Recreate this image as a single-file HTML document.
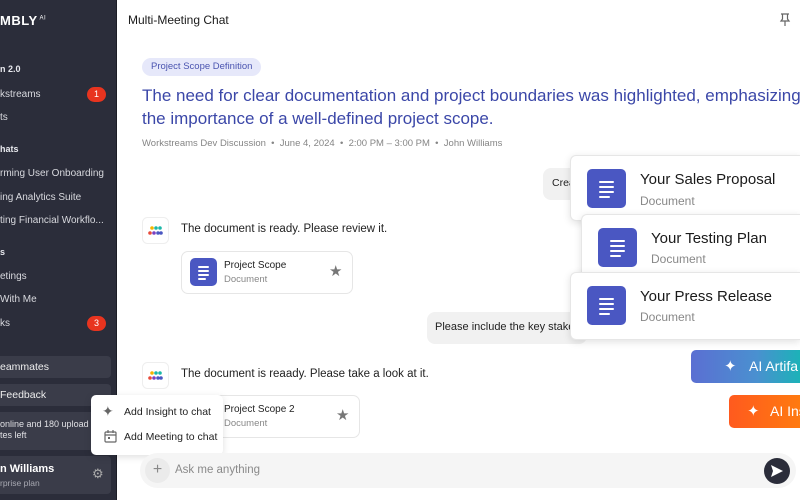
<!DOCTYPE html>
<html><head><meta charset="utf-8"><style>
*{box-sizing:border-box;margin:0;padding:0}
html,body{width:800px;height:500px;overflow:hidden}
body{position:relative;font-family:"Liberation Sans",sans-serif;background:#fff;color:#222}
#wrap{position:absolute;left:0;top:0;width:800px;height:500px;overflow:hidden}
.a{position:absolute;white-space:nowrap}
#sb{position:absolute;left:0;top:0;width:117px;height:500px;background:#2b2d3a;border-right:1px solid #1c1d26;overflow:hidden}
.sb{color:#d8d9de;font-size:10px}
.sh{color:#e8e9ee;font-size:9px;font-weight:bold}
.badge{position:absolute;width:19px;height:15px;border-radius:8px;background:#e8341f;color:#fff;font-size:9px;text-align:center;line-height:15px}
.btn{position:absolute;left:0;width:111px;background:#3a3c49;border-radius:0 4px 4px 0}
.doc{position:absolute;background:#4a57c2;border-radius:5px}
.doc i{position:absolute;left:30%;height:2px;background:#fff;border-radius:1px}
.card{position:absolute;background:#fff;border:1px solid #e6e6e6;border-radius:7px}
.rc{position:absolute;background:#fff;border:1px solid #e6e6e6;border-right:none;border-radius:6px 0 0 6px;box-shadow:0 2px 8px rgba(0,0,0,.12)}
.bc{position:absolute;background:#fff;box-shadow:0 2px 8px rgba(0,0,0,.13);border-radius:5px}
</style></head><body><div id="wrap">
<div id="sb">
<div class="a" style="left:0;top:13px;color:#fff;font-weight:bold;font-size:13px;letter-spacing:.5px">MBLY<sup style="font-size:6px;font-weight:normal"> AI</sup></div>
<div class="a sh" style="top:64px;left:0">n 2.0</div>
<div class="a sb" style="top:89px">kstreams</div><div class="badge" style="left:87px;top:87px">1</div>
<div class="a sb" style="top:112px">ts</div>
<div class="a sh" style="top:144px">hats</div>
<div class="a sb" style="top:168px">rming User Onboarding</div>
<div class="a sb" style="top:192px">ing Analytics Suite</div>
<div class="a sb" style="top:215px">ting Financial Workflo...</div>
<div class="a sh" style="top:247px">s</div>
<div class="a sb" style="top:271px">etings</div>
<div class="a sb" style="top:294px">With Me</div>
<div class="a sb" style="top:318px">ks</div><div class="badge" style="left:87px;top:316px">3</div>
<div class="btn" style="top:356px;height:22px"></div><div class="a sb" style="top:361px;color:#eee;font-size:10.5px">eammates</div>
<div class="btn" style="top:384px;height:22px"></div><div class="a sb" style="top:389px;color:#eee;font-size:10.5px">Feedback</div>
<div class="btn" style="top:412px;height:38px"></div>
<div class="a" style="top:419px;color:#e0e0e4;font-size:9px;line-height:11px">online and 180 upload<br>tes left</div>
<div class="btn" style="top:456px;height:38px"></div>
<div class="a" style="top:463px;color:#fff;font-size:11px;font-weight:bold">n Williams</div>
<div class="a" style="top:478px;color:#a8a9b2;font-size:8.5px">rprise plan</div>
<div class="a" style="left:92px;top:466px;color:#aaa;font-size:13px">⚙</div>
</div>

<div class="a" style="left:128px;top:13px;font-size:12px;color:#1a1a1a">Multi-Meeting Chat</div>
<svg class="a" style="left:779px;top:13px" width="12" height="14" viewBox="0 0 12 14"><path d="M2 1h8M3.5 1v5L2 8h8L8.5 6V1M6 8v5" stroke="#666" stroke-width="1.2" fill="none"/></svg>

<div class="a" style="left:142px;top:58px;height:18px;padding:0 9px;background:#e6e8fa;border-radius:9px;color:#4a54b0;font-size:9.5px;line-height:18px">Project Scope Definition</div>
<div class="a" style="left:142px;top:84px;color:#3b47a8;font-size:17px;line-height:23px;font-weight:500">The need for clear documentation and project boundaries was highlighted, emphasizing<br>the importance of a well-defined project scope.</div>
<div class="a" style="left:142px;top:138px;color:#858585;font-size:9.5px">Workstreams Dev Discussion &nbsp;•&nbsp; June 4, 2024 &nbsp;•&nbsp; 2:00 PM – 3:00 PM &nbsp;•&nbsp; John Williams</div>

<div class="a" style="left:543px;top:168px;width:120px;height:32px;background:#f1f1f1;border-radius:8px;font-size:10.5px;padding:9px 9px">Crea</div>

<svg class="a" style="left:142px;top:217px" width="27" height="27"><rect x=".5" y=".5" width="26" height="26" rx="5" fill="#fff" stroke="#eee"/><circle cx="10" cy="11" r="1.8" fill="#f5b400"/><circle cx="14" cy="11" r="1.8" fill="#1cb8a8"/><circle cx="18" cy="11" r="1.8" fill="#1cb8a8"/><circle cx="8" cy="16" r="1.8" fill="#e84a3a"/><circle cx="12" cy="16" r="1.8" fill="#7a3fc0"/><circle cx="16" cy="16" r="1.8" fill="#4a57c2"/><circle cx="19" cy="16" r="1.8" fill="#4a57c2"/></svg>
<div class="a" style="left:181px;top:223px;font-size:11.5px">The document is ready. Please review it.</div>
<div class="card" style="left:181px;top:251px;width:172px;height:43px"></div>
<div class="doc" style="left:190px;top:258px;width:27px;height:28px"><i style="top:8px;width:40%"></i><i style="top:12px;width:40%"></i><i style="top:16px;width:40%"></i><i style="top:20px;width:28%"></i></div>
<div class="a" style="left:224px;top:260px;font-size:10px">Project Scope</div>
<div class="a" style="left:224px;top:274px;font-size:9.5px;color:#888">Document</div>
<div class="a" style="left:329px;top:262px;font-size:15px;color:#777">★</div>

<div class="a" style="left:427px;top:312px;width:160px;height:32px;background:#f1f1f1;border-radius:8px;font-size:11px;padding:9px 8px">Please include the key stake</div>

<svg class="a" style="left:142px;top:362px" width="27" height="27"><rect x=".5" y=".5" width="26" height="26" rx="5" fill="#fff" stroke="#eee"/><circle cx="10" cy="11" r="1.8" fill="#f5b400"/><circle cx="14" cy="11" r="1.8" fill="#1cb8a8"/><circle cx="18" cy="11" r="1.8" fill="#1cb8a8"/><circle cx="8" cy="16" r="1.8" fill="#e84a3a"/><circle cx="12" cy="16" r="1.8" fill="#7a3fc0"/><circle cx="16" cy="16" r="1.8" fill="#4a57c2"/><circle cx="19" cy="16" r="1.8" fill="#4a57c2"/></svg>
<div class="a" style="left:181px;top:368px;font-size:11.5px">The document is reaady. Please take a look at it.</div>
<div class="card" style="left:181px;top:395px;width:179px;height:43px"></div>
<div class="a" style="left:224px;top:404px;font-size:10px">Project Scope 2</div>
<div class="a" style="left:224px;top:418px;font-size:9.5px;color:#888">Document</div>
<div class="a" style="left:336px;top:406px;font-size:15px;color:#777">★</div>

<div class="bc" style="left:91px;top:395px;width:132px;height:60px"></div>
<div class="a" style="left:102px;top:403px;font-size:14px;color:#666">✦</div>
<div class="a" style="left:124px;top:406px;font-size:10.5px">Add Insight to chat</div>
<svg class="a" style="left:104px;top:430px" width="13" height="13"><rect x="1" y="2" width="11" height="10" rx="1" fill="none" stroke="#666" stroke-width="1.2"/><path d="M1 5h11M4 0v3M9 0v3" stroke="#666" stroke-width="1.2"/><rect x="4" y="7" width="2" height="2" fill="#666"/></svg>
<div class="a" style="left:124px;top:431px;font-size:10.5px">Add Meeting to chat</div>

<div class="a" style="left:140px;top:453px;width:656px;height:35px;background:#f5f5f5;border-radius:18px"></div>
<div class="a" style="left:145px;top:458px;width:25px;height:25px;border-radius:50%;background:#ebebeb;color:#888;font-size:16px;text-align:center;line-height:24px">+</div>
<div class="a" style="left:175px;top:464px;font-size:11.5px;color:#8a8a8a">Ask me anything</div>
<div class="a" style="left:764px;top:458px;width:26px;height:26px;border-radius:50%;background:#2b2d3a"></div>
<svg class="a" style="left:770px;top:464px" width="14" height="14"><path d="M1 1l12 6-12 6 2-6z" fill="#fff"/></svg>

<div class="rc" style="left:570px;top:155px;width:230px;height:66px"></div>
<div class="doc" style="left:587px;top:169px;width:39px;height:39px"><i style="top:12px;width:40%"></i><i style="top:17px;width:40%"></i><i style="top:22px;width:40%"></i><i style="top:27px;width:28%"></i></div>
<div class="a" style="left:640px;top:171px;font-size:15px;color:#1a1a1a">Your Sales Proposal</div>
<div class="a" style="left:640px;top:194px;font-size:12px;color:#888">Document</div>

<div class="rc" style="left:581px;top:214px;width:219px;height:66px"></div>
<div class="doc" style="left:598px;top:228px;width:39px;height:39px"><i style="top:12px;width:40%"></i><i style="top:17px;width:40%"></i><i style="top:22px;width:40%"></i><i style="top:27px;width:28%"></i></div>
<div class="a" style="left:651px;top:230px;font-size:15px;color:#1a1a1a">Your Testing Plan</div>
<div class="a" style="left:651px;top:252px;font-size:12px;color:#888">Document</div>

<div class="rc" style="left:570px;top:272px;width:230px;height:68px"></div>
<div class="doc" style="left:587px;top:286px;width:39px;height:39px"><i style="top:12px;width:40%"></i><i style="top:17px;width:40%"></i><i style="top:22px;width:40%"></i><i style="top:27px;width:28%"></i></div>
<div class="a" style="left:640px;top:288px;font-size:15px;color:#1a1a1a">Your Press Release</div>
<div class="a" style="left:640px;top:310px;font-size:12px;color:#888">Document</div>

<div class="a" style="left:691px;top:350px;width:109px;height:33px;border-radius:5px 0 0 5px;background:linear-gradient(90deg,#5b6fd2,#4a90d0 60%,#1cb2b8)"></div>
<div class="a" style="left:724px;top:357px;color:#fff;font-size:15px">✦</div>
<div class="a" style="left:749px;top:358px;color:#fff;font-size:14px">AI Artifa</div>
<div class="a" style="left:729px;top:395px;width:71px;height:33px;border-radius:5px 0 0 5px;background:linear-gradient(90deg,#ff5a1e,#ff7a10)"></div>
<div class="a" style="left:747px;top:402px;color:#fff;font-size:15px">✦</div>
<div class="a" style="left:770px;top:403px;color:#fff;font-size:14px">AI Ins</div>
</div></body></html>
